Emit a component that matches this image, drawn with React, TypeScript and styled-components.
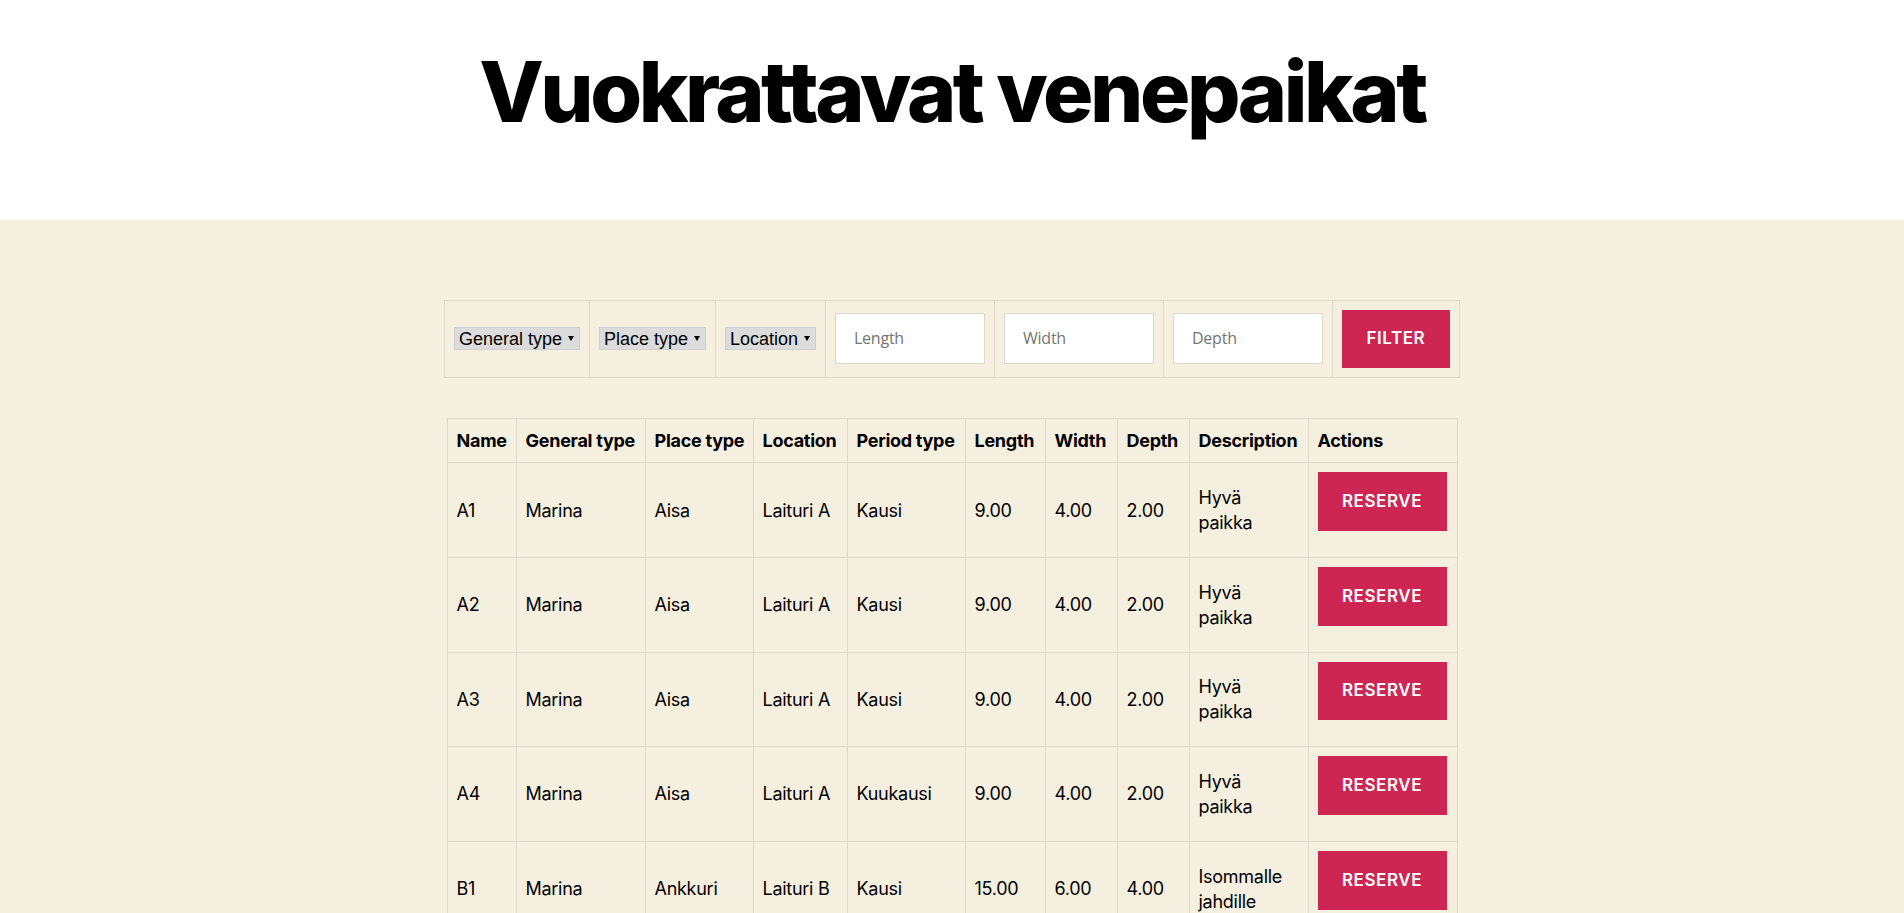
import React from "react";
import styled, { createGlobalStyle } from "styled-components";

const GlobalStyle = createGlobalStyle`
  html, body { margin: 0; padding: 0; }
  body {
    background: #f5efe0;
    font-family: Inter, "Noto Sans", sans-serif;
    color: #000;
  }
  * { box-sizing: border-box; }
`;

const Header = styled.header`
  background: #fff;
  padding: 44px 0 80px;
`;

const Title = styled.h1`
  margin: 0;
  font-family: Inter, sans-serif;
  font-weight: 800;
  font-size: 84px;
  line-height: 1.138;
  letter-spacing: -0.0415625em;
  text-align: center;
  color: #000;
`;

const Main = styled.main`
  padding-top: 80px;
`;

const FilterTable = styled.table`
  margin: 0 auto 40px;
  border-collapse: collapse;
  border: 1px solid #dcd7ca;
  table-layout: fixed;
  width: 1015px;
`;

const Col = styled.col<{ $w: number }>`
  width: ${(p) => p.$w}px;
`;

const FilterCell = styled.td`
  border: 1px solid #dcd7ca;
  padding: 9px;
  vertical-align: middle;
`;

const SelectBox = styled.label`
  display: flex;
  align-items: center;
  height: 23px;
  background: #dcdcdc;
  border: 1px solid #cfcfcf;
`;

const Select = styled.select`
  flex: 1;
  min-width: 0;
  height: 21px;
  appearance: none;
  -webkit-appearance: none;
  font-family: "Liberation Sans", Arial, sans-serif;
  font-size: 18px;
  color: #000;
  background: transparent;
  border: none;
  border-radius: 0;
  padding: 0 0 0 4px;
  margin: 0;
  outline: none;
`;

const Arrow = styled.svg`
  flex: none;
  width: 6px;
  height: 5px;
  margin-right: 5px;
  pointer-events: none;
`;

const Input = styled.input`
  display: block;
  width: 100%;
  margin: 0;
  padding: 15px 18px;
  font-family: "Open Sans", sans-serif;
  font-size: 16px;
  line-height: 19px;
  letter-spacing: -0.015em;
  color: #000;
  background: #fff;
  border: 1px solid #dcd7ca;
  border-radius: 0;
  &::placeholder { color: #757575; }
`;

const Button = styled.button<{ $gap?: number }>`
  display: inline-block;
  margin: 0 0 ${(p) => p.$gap ?? 0}px;
  padding: 1.1em 1.44em;
  border: none;
  border-radius: 0;
  background: #cd2653;
  color: #fff;
  font-family: Inter, sans-serif;
  font-size: 17px;
  font-weight: 600;
  line-height: 1.25;
  letter-spacing: 0.0333em;
  text-transform: uppercase;
  cursor: pointer;
`;

const DataTable = styled.table`
  margin: 0 auto;
  border-collapse: collapse;
  border: 1px solid #dcd7ca;
  table-layout: fixed;
  width: 1010px;
  font-size: 18px;
  line-height: 1.4;
  letter-spacing: -0.015em;
`;

const Th = styled.th`
  border: 1px solid #dcd7ca;
  padding: 9px;
  text-align: left;
  font-weight: 700;
  white-space: nowrap;
  vertical-align: middle;
`;

const Td = styled.td`
  border: 1px solid #dcd7ca;
  padding: 9px;
  text-align: left;
  font-weight: 400;
  vertical-align: middle;
`;

const ActionTd = styled(Td)`
  vertical-align: top;
`;

type Place = {
  name: string;
  general: string;
  place: string;
  location: string;
  period: string;
  length: string;
  width: string;
  depth: string;
  description: string;
};

const places: Place[] = [
  { name: "A1", general: "Marina", place: "Aisa", location: "Laituri A", period: "Kausi", length: "9.00", width: "4.00", depth: "2.00", description: "Hyvä paikka" },
  { name: "A2", general: "Marina", place: "Aisa", location: "Laituri A", period: "Kausi", length: "9.00", width: "4.00", depth: "2.00", description: "Hyvä paikka" },
  { name: "A3", general: "Marina", place: "Aisa", location: "Laituri A", period: "Kausi", length: "9.00", width: "4.00", depth: "2.00", description: "Hyvä paikka" },
  { name: "A4", general: "Marina", place: "Aisa", location: "Laituri A", period: "Kuukausi", length: "9.00", width: "4.00", depth: "2.00", description: "Hyvä paikka" },
  { name: "B1", general: "Marina", place: "Ankkuri", location: "Laituri B", period: "Kausi", length: "15.00", width: "6.00", depth: "4.00", description: "Isommalle jahdille" },
];

const filterCols = [145, 126, 110, 169, 169, 169, 127];
const dataCols = [69, 129, 108, 94, 118, 80, 72, 72, 119, 149];
const headers = ["Name", "General type", "Place type", "Location", "Period type", "Length", "Width", "Depth", "Description", "Actions"];
const selects = ["General type", "Place type", "Location"];

function FilterSelect({ label }: { label: string }) {
  return (
    <SelectBox>
      <Select defaultValue="" aria-label={label}>
        <option value="">{label}</option>
      </Select>
      <Arrow viewBox="0 0 6 5" aria-hidden="true">
        <path d="M0 0H6L3 5Z" fill="#000" />
      </Arrow>
    </SelectBox>
  );
}

export default function App() {
  return (
    <>
      <GlobalStyle />
      <Header>
        <Title>Vuokrattavat venepaikat</Title>
      </Header>
      <Main>
        <FilterTable>
          <colgroup>
            {filterCols.map((w, i) => (
              <Col key={i} $w={w} />
            ))}
          </colgroup>
          <tbody>
            <tr>
              {selects.map((s) => (
                <FilterCell key={s}>
                  <FilterSelect label={s} />
                </FilterCell>
              ))}
              <FilterCell>
                <Input placeholder="Length" />
              </FilterCell>
              <FilterCell>
                <Input placeholder="Width" />
              </FilterCell>
              <FilterCell>
                <Input placeholder="Depth" />
              </FilterCell>
              <FilterCell>
                <Button>Filter</Button>
              </FilterCell>
            </tr>
          </tbody>
        </FilterTable>
        <DataTable>
          <colgroup>
            {dataCols.map((w, i) => (
              <Col key={i} $w={w} />
            ))}
          </colgroup>
          <thead>
            <tr>
              {headers.map((h) => (
                <Th key={h}>{h}</Th>
              ))}
            </tr>
          </thead>
          <tbody>
            {places.map((p) => (
              <tr key={p.name}>
                <Td>{p.name}</Td>
                <Td>{p.general}</Td>
                <Td>{p.place}</Td>
                <Td>{p.location}</Td>
                <Td>{p.period}</Td>
                <Td>{p.length}</Td>
                <Td>{p.width}</Td>
                <Td>{p.depth}</Td>
                <Td>{p.description}</Td>
                <ActionTd>
                  <Button $gap={17}>Reserve</Button>
                </ActionTd>
              </tr>
            ))}
          </tbody>
        </DataTable>
      </Main>
    </>
  );
}
